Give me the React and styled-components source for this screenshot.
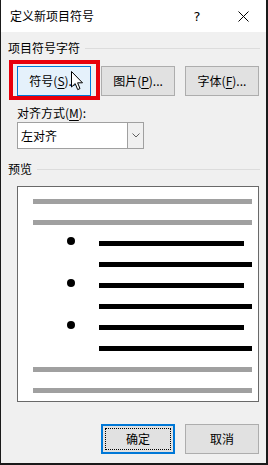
import React from 'react';
import styled, { createGlobalStyle } from 'styled-components';

const GlobalStyle = createGlobalStyle`
  html, body { margin: 0; padding: 0; background: #fff; }
  body {
    font-family: "Noto Sans CJK SC", "Noto Sans", sans-serif;
    font-size: 12px;
    color: #000;
  }
  * { box-sizing: border-box; }
`;

// dialog frame
const Window = styled.div`
  width: 268px;
  height: 465px;
  display: flex;
  flex-direction: column;
  background: #f0f0f0;
  border-left: 1px solid #1a1a1a;
  border-right: 2px solid #1a1a1a;
  border-bottom: 2px solid #1a1a1a;
`;

const TitleBar = styled.div`
  flex: none;
  height: 32px;
  display: flex;
  align-items: center;
  padding-left: 9px;
  background: #fff;
`;

const Title = styled.div`
  flex: 1;
  line-height: 16px;
`;

const TitleButton = styled.div`
  width: 46px;
  height: 32px;
  display: flex;
  align-items: center;
  justify-content: center;
  font-family: "DejaVu Sans", sans-serif;
  font-size: 13px;
`;

const Body = styled.div`
  flex: 1;
  display: flex;
  flex-direction: column;
  align-items: flex-start;
  padding: 0 6px 0 7px;
`;

const GroupHeader = styled.div`
  align-self: stretch;
  display: flex;
  align-items: center;
  gap: 5px;
  margin-top: ${p => p.$top}px;
  line-height: 16px;

  &::after {
    content: "";
    flex: 1;
    height: 1px;
    background: #dcdcdc;
  }
`;

const ButtonRow = styled.div`
  display: flex;
  gap: 10px;
  margin: 10px 0 0 9px;
`;

const Button = styled.div`
  position: relative;
  width: 74px;
  height: 30px;
  display: flex;
  align-items: center;
  justify-content: center;
  line-height: 16px;
  background: ${p => (p.$hover ? '#e5f1fb' : '#e1e1e1')};
  border: ${p => (p.$focus ? 2 : 1)}px solid ${p => (p.$hover || p.$focus ? '#0078d7' : '#adadad')};
  outline: ${p => (p.$focus ? '1px dotted #000' : 'none')};
  outline-offset: -5px;

  /* red annotation box around the button */
  &::after {
    content: ${p => (p.$marked ? '""' : 'none')};
    position: absolute;
    top: -7px;
    bottom: -5px;
    left: -9px;
    right: -10px;
    border: 4px solid #e8000b;
  }
`;

const Key = styled.span`
  text-decoration: underline;
  text-underline-offset: 2px;
`;

const Cursor = styled.svg`
  position: absolute;
  left: 53px;
  top: 4px;
`;

const Label = styled.div`
  margin: 9px 0 0 9px;
  line-height: 16px;
`;

const Select = styled.div`
  width: 127px;
  height: 27px;
  margin: 1px 0 0 9px;
  display: flex;
  background: #fff;
  border: 1px solid #a0a0a0;
`;

const SelectValue = styled.div`
  flex: 1;
  display: flex;
  align-items: center;
  padding-left: 3px;
  line-height: 16px;
`;

const SelectArrow = styled.div`
  width: 16px;
  display: flex;
  align-items: center;
  justify-content: center;
  background: #f0f0f0;
  border-left: 1px solid #a0a0a0;
`;

const Preview = styled.div`
  width: 242px;
  height: 216px;
  margin: 9px 0 0 9px;
  padding: 12px 6px 0 15px;
  display: flex;
  flex-direction: column;
  gap: 16px;
  background: #fff;
  border: 1px solid #696969;
`;

const Line = styled.div`
  height: 5px;
  display: grid;
  grid-template-columns: 66px 1fr;
`;

const Bar = styled.div`
  grid-column: ${p => (p.$gray ? '1 / -1' : '2')};
  height: 5px;
  margin-right: ${p => (p.$short ? 8 : 0)}px;
  background: ${p => (p.$gray ? '#a0a0a0' : '#000')};
`;

const Dot = styled.div`
  grid-column: 1;
  grid-row: 1;
  width: 8px;
  height: 8px;
  margin: -4px 0 0 34px;
  border-radius: 50%;
  background: #000;
`;

const Footer = styled.div`
  align-self: stretch;
  display: flex;
  justify-content: flex-end;
  gap: 10px;
  margin: 22px 1px 0 0;
`;

const lines = [
  { gray: true },
  { gray: true },
  { dot: true, short: true },
  {},
  { dot: true, short: true },
  {},
  { dot: true, short: true },
  {},
  { gray: true },
  { gray: true },
];

export default function App() {
  return (
    <>
      <GlobalStyle />
      <Window>
        <TitleBar>
          <Title>定义新项目符号</Title>
          <TitleButton>?</TitleButton>
          <TitleButton>
            <svg width="11" height="11" viewBox="0 0 11 11">
              <path d="M0.5 0.5 L10.5 10.5 M10.5 0.5 L0.5 10.5" stroke="#000" strokeWidth="1" />
            </svg>
          </TitleButton>
        </TitleBar>

        <Body>
          <GroupHeader $top={8}>项目符号字符</GroupHeader>
          <ButtonRow>
            <Button $hover $marked>
              符号(<Key>S</Key>)...
              <Cursor width="13" height="20" viewBox="0 0 13 20">
                <path
                  d="M0.5 0.5 L0.5 16 L4.2 12.6 L6.7 18.6 L9 17.6 L6.6 11.8 L11.5 11.8 Z"
                  fill="#fff"
                  stroke="#000"
                  strokeWidth="1"
                  strokeLinejoin="miter"
                />
              </Cursor>
            </Button>
            <Button>图片(<Key>P</Key>)...</Button>
            <Button>字体(<Key>F</Key>)...</Button>
          </ButtonRow>

          <Label>对齐方式(<Key>M</Key>):</Label>
          <Select>
            <SelectValue>左对齐</SelectValue>
            <SelectArrow>
              <svg width="8" height="5" viewBox="0 0 8 5">
                <path d="M0.5 0.5 L4 4 L7.5 0.5" stroke="#606060" fill="none" strokeWidth="1" />
              </svg>
            </SelectArrow>
          </Select>

          <GroupHeader $top={12}>预览</GroupHeader>
          <Preview>
            {lines.map((l, i) => (
              <Line key={i}>
                {l.dot && <Dot />}
                <Bar $gray={l.gray} $short={l.short} />
              </Line>
            ))}
          </Preview>

          <Footer>
            <Button $focus>确定</Button>
            <Button>取消</Button>
          </Footer>
        </Body>
      </Window>
    </>
  );
}
